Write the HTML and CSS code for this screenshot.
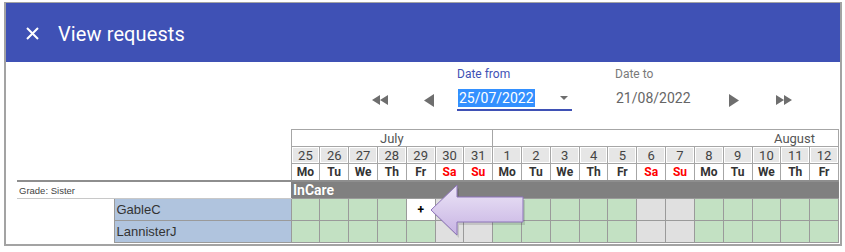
FILE: index.html
```html
<!DOCTYPE html>
<html lang="en">
<head>
    <meta charset="UTF-8">
    <meta name="viewport" content="width=device-width, initial-scale=1.0">
    <title>View requests</title>
    <link rel="stylesheet" href="styles.css">
</head>
<body>
    <div class="dialog">
        <div class="dialog-header">
            <svg class="close" width="13" height="13" viewBox="0 0 13 13"><path d="M1 1L12 12M12 1L1 12" stroke="#fff" stroke-width="2"/></svg>
            <span class="title">View requests</span>
        </div>

        <div class="toolbar">
            <button class="nav nav-first"><svg width="17" height="10" viewBox="0 0 17 10"><path d="M0 5L8 0V10ZM8 5L16 0V10Z" fill="#6e6e6e"/></svg></button>
            <button class="nav nav-prev"><svg width="10" height="13" viewBox="0 0 10 13"><path d="M0 6.5L10 0V13Z" fill="#6e6e6e"/></svg></button>
            <div class="date-field active">
                <label>Date from</label>
                <div class="date-input">
                    <span class="selected">25/07/2022</span>
                    <svg class="caret" width="8" height="4" viewBox="0 0 8 4"><path d="M0 0H8L4 4Z" fill="#6e6e6e"/></svg>
                </div>
            </div>
            <div class="date-field">
                <label>Date to</label>
                <div class="date-input">21/08/2022</div>
            </div>
            <button class="nav nav-next"><svg width="10" height="13" viewBox="0 0 10 13"><path d="M0 0L10 6.5L0 13Z" fill="#6e6e6e"/></svg></button>
            <button class="nav nav-last"><svg width="17" height="10" viewBox="0 0 17 10"><path d="M0 0L8 5L0 10ZM8 0L16 5L8 10Z" fill="#6e6e6e"/></svg></button>
        </div>

        <div class="planner">
            <table class="grid">
                <colgroup>
                    <col class="col-grade">
                    <col class="col-name">
                    <col><col><col><col><col><col><col><col><col><col>
                    <col><col><col><col><col><col><col><col><col>
                </colgroup>
                <thead>
                    <tr class="months">
                        <th colspan="2" class="blank"></th>
                        <th colspan="7">July</th>
                        <th colspan="12" class="month-aug">August</th>
                    </tr>
                    <tr class="days">
                        <th colspan="2" class="blank"></th>
                        <th>25</th><th>26</th><th>27</th><th>28</th><th>29</th><th>30</th><th>31</th>
                        <th>1</th><th>2</th><th>3</th><th>4</th><th>5</th><th>6</th><th>7</th>
                        <th>8</th><th>9</th><th>10</th><th>11</th><th>12</th>
                    </tr>
                    <tr class="wdays">
                        <th colspan="2" class="blank"></th>
                        <th>Mo</th><th>Tu</th><th>We</th><th>Th</th><th>Fr</th><th class="we">Sa</th><th class="we">Su</th>
                        <th>Mo</th><th>Tu</th><th>We</th><th>Th</th><th>Fr</th><th class="we">Sa</th><th class="we">Su</th>
                        <th>Mo</th><th>Tu</th><th>We</th><th>Th</th><th>Fr</th>
                    </tr>
                </thead>
                <tbody>
                    <tr class="grade">
                        <td colspan="2" class="grade-label">Grade: Sister</td>
                        <td colspan="19" class="team">InCare</td>
                    </tr>
                    <tr class="staff">
                        <td class="spacer"></td>
                        <td class="name">GableC</td>
                        <td class="on"></td><td class="on"></td><td class="on"></td><td class="on"></td>
                        <td class="add">+</td><td class="off"></td><td class="off"></td>
                        <td class="on"></td><td class="on"></td><td class="on"></td><td class="on"></td><td class="on"></td>
                        <td class="off"></td><td class="off"></td>
                        <td class="on"></td><td class="on"></td><td class="on"></td><td class="on"></td><td class="on"></td>
                    </tr>
                    <tr class="staff">
                        <td class="spacer"></td>
                        <td class="name">LannisterJ</td>
                        <td class="on"></td><td class="on"></td><td class="on"></td><td class="on"></td>
                        <td class="on"></td><td class="off"></td><td class="off"></td>
                        <td class="on"></td><td class="on"></td><td class="on"></td><td class="on"></td><td class="on"></td>
                        <td class="off"></td><td class="off"></td>
                        <td class="on"></td><td class="on"></td><td class="on"></td><td class="on"></td><td class="on"></td>
                    </tr>
                </tbody>
            </table>

            <!-- callout arrow pointing at the add cell -->
            <svg class="callout" width="100" height="60" viewBox="0 0 100 60">
                <defs>
                    <linearGradient id="arrowFill" x1="0" y1="0" x2="0" y2="1">
                        <stop offset="0" stop-color="#ece5f7"/>
                        <stop offset="1" stop-color="#c7b3e3"/>
                    </linearGradient>
                </defs>
                <path d="M5 31L31 6V18H97V43H31V56Z" fill="#000" opacity="0.12"/>
                <path d="M3 28L29 3V15H95V40H29V53Z" fill="url(#arrowFill)" stroke="#8d74ba" stroke-width="1"/>
            </svg>
        </div>
    </div>
</body>
</html>
```

FILE: styles.css
```css
body {
    margin: 0;
    background-color: #fff;
    font-family: Roboto, "Liberation Sans", sans-serif;
}
.dialog {
    width: 834px;
    margin: 2px 0 0 4px;
    border: 2px solid #a3a3a3;
    border-top-width: 1px;
}
.dialog-header {
    height: 59px;
    background-color: #3f51b5;
    display: flex;
    align-items: center;
    padding-left: 20px;
    padding-top: 2px;
    box-sizing: border-box;
}
.close {
    margin-right: 19px;
}
.title {
    color: #fff;
    font-size: 20px;
    letter-spacing: 0.1px;
}
.toolbar {
    height: 67px;
    box-sizing: border-box;
    display: flex;
    align-items: flex-start;
    padding: 5px 0 0 366px;
}
.nav {
    border: none;
    background: none;
    padding: 0;
    margin-top: 25px;
    height: 16px;
    display: flex;
    align-items: center;
}
.nav-first {
    width: 17px;
    margin-right: 35px;
}
.nav-prev {
    width: 10px;
    margin-right: 23px;
}
.nav-next {
    width: 11px;
    margin-right: 36px;
}
.nav-last {
    width: 17px;
}
.date-field {
    width: 114px;
}
.date-field.active {
    width: 115px;
    margin-right: 43px;
}
.date-field label {
    display: block;
    font-size: 12px;
    line-height: 14px;
    color: #7a7a7a;
}
.date-field.active label {
    color: #3f51b5;
}
.date-input {
    margin-top: 6px;
    height: 22px;
    display: flex;
    align-items: center;
    justify-content: space-between;
    font-size: 14px;
    color: #666;
    padding-left: 1px;
    border-bottom: 2px solid transparent;
}
.date-field.active .date-input {
    border-bottom-color: #3f51b5;
}
.selected {
    background-color: #3390ff;
    color: #fff;
    line-height: 18px;
    padding: 0 1px;
}
.caret {
    margin-right: 4px;
}
.planner {
    position: relative;
    padding: 0 1px 1px 11px;
}
.grid {
    width: 822px;
    table-layout: fixed;
    border-collapse: collapse;
}
.col-grade {
    width: 97px;
}
.col-name {
    width: 177px;
}
.grid th {
    border: 1px solid #a6a6a6;
    box-shadow: inset 0 0 0 1px #fff;
    padding: 0;
    height: 16px;
    font-size: 13px;
    font-weight: normal;
    color: #444;
    text-align: center;
}
.months th {
    color: #555;
}
.months th.month-aug {
    text-align: right;
    padding-right: 23px;
}
.days th {
    background-color: #e6e6e6;
}
.wdays th {
    font-size: 12px;
    font-weight: bold;
    color: #333;
}
.wdays th.we {
    color: #f00;
}
.grid th.blank {
    border: none;
    box-shadow: none;
    background-color: #fff;
}
.grade td {
    border-top: 2px solid #8e8e8e;
    height: 15px;
    padding: 0;
}
.grade-label {
    font-family: "Liberation Sans", sans-serif;
    font-size: 9.5px;
    color: #444;
    padding-left: 2px !important;
    border-bottom: 1px solid #c8c8c8;
}
.team {
    background-color: #808080;
    color: #fff;
    font-weight: bold;
    font-size: 14px;
    padding-left: 2px !important;
    text-shadow: 0 0 1px #666;
}
.staff td {
    height: 21px;
    padding: 0;
    border: 1px solid #9a9a9a;
}
.staff td.spacer {
    border: none;
}
.name {
    background-color: #b0c4de;
    font-family: "Liberation Sans", sans-serif;
    font-size: 13px;
    color: #333;
    padding-left: 2px !important;
}
.on {
    background-color: #c3e1c3;
}
.off {
    background-color: #e0e0e0;
}
.add {
    background-color: #fff;
    text-align: center;
    font-weight: bold;
    font-size: 12px;
    color: #000;
}
.callout {
    position: absolute;
    left: 422px;
    top: 53px;
}
```
